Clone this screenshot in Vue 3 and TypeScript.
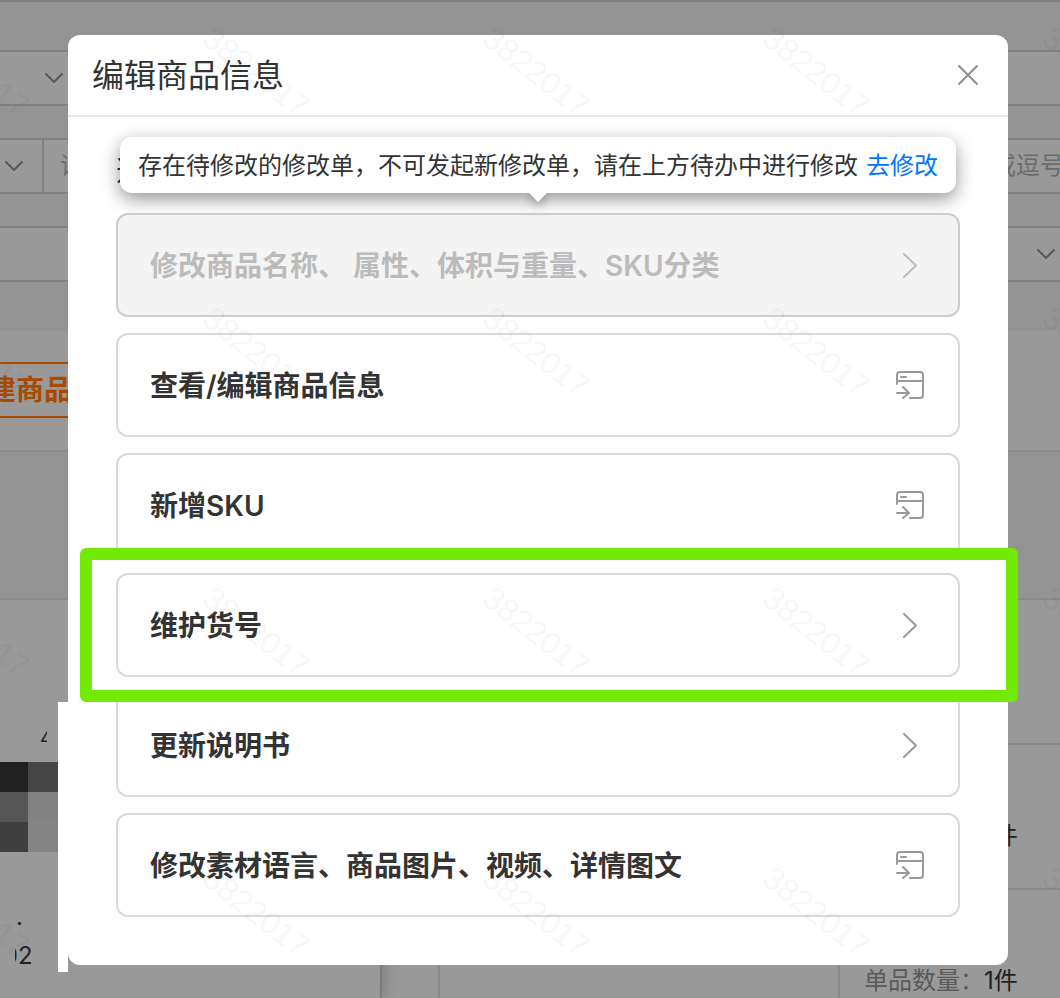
<script setup lang="ts">
type ActionKind = 'enter' | 'open'

interface EditAction {
  label: string
  kind: ActionKind
  disabled?: boolean
  marked?: boolean
}

const actions: EditAction[] = [
  { label: '修改商品名称、 属性、体积与重量、SKU分类', kind: 'enter', disabled: true },
  { label: '查看/编辑商品信息', kind: 'open' },
  { label: '新增SKU', kind: 'open' },
  { label: '维护货号', kind: 'enter', marked: true },
  { label: '更新说明书', kind: 'enter' },
  { label: '修改素材语言、商品图片、视频、详情图文', kind: 'open' },
]

const watermark = '3822017'
const watermarkCount = 20
</script>

<template>
  <div class="page">
    <div class="backdrop">
      <section class="filters">
        <div class="field">
          <button class="picker first" type="button" aria-label="展开">
            <svg width="20" height="20" viewBox="0 0 20 20"><path d="M2 6l8 8 8-8" /></svg>
          </button>
        </div>
        <div class="field">
          <button class="picker split" type="button" aria-label="展开">
            <svg width="20" height="20" viewBox="0 0 20 20"><path d="M2 6l8 8 8-8" /></svg>
          </button>
          <input class="grow" type="text" placeholder="请" aria-label="请" />
          <input class="tail" type="text" placeholder="或逗号" aria-label="或逗号" />
        </div>
        <div class="field end">
          <button class="picker last" type="button" aria-label="展开">
            <svg width="20" height="20" viewBox="0 0 20 20"><path d="M2 6l8 8 8-8" /></svg>
          </button>
        </div>
      </section>
      <div class="toolbar">
        <button class="create" type="button">建商品</button>
      </div>
      <div class="table-head"></div>
      <div class="records">
        <div class="pinned">
          <div class="code"><span class="part">4</span></div>
          <div class="mosaic"><i></i><i></i><i></i><i></i><i></i><i></i></div>
          <div class="dot">·</div>
          <div class="number"><span class="slice"><span>0</span></span>2</div>
        </div>
        <div class="spacer"></div>
        <div class="rows">
          <div class="record"></div>
          <div class="record"><span class="quantity">单品数量：</span>1件</div>
          <div class="record"><span class="quantity">单品数量：</span>1件</div>
        </div>
      </div>
    </div>

    <div class="overlay">
      <div class="patch"></div>
      <main class="dialog" role="dialog" aria-labelledby="dialog-title">
        <header class="dialog-head">
          <h1 id="dialog-title">编辑商品信息</h1>
          <button class="close" type="button" aria-label="关闭">
            <svg width="24" height="24" viewBox="0 0 24 24"><path d="M3 3l18 18M21 3L3 21" /></svg>
          </button>
        </header>
        <div class="intro">
          <span>选</span>
          <div class="tip" role="tooltip">
            <span>存在待修改的修改单，不可发起新修改单，请在上方待办中进行修改</span>
            <a href="#">去修改</a>
          </div>
        </div>
        <ul class="actions">
          <li v-for="action in actions" :key="action.label">
            <button class="action" type="button" :disabled="action.disabled">
              <span>{{ action.label }}</span>
              <svg v-if="action.kind === 'enter'" width="32" height="32" viewBox="0 0 32 32">
                <path d="M10 5l12 11.500L10 28" />
              </svg>
              <svg v-else width="32" height="32" viewBox="0 0 32 32">
                <path d="M3 15V6a3 3 0 0 1 3-3h20a3 3 0 0 1 3 3v20a3 3 0 0 1-3 3H16" />
                <path d="M4 12h24M7 8h5M3 24h12M9 18l6 6-6 5" />
              </svg>
            </button>
            <div v-if="action.marked" class="marker"></div>
          </li>
        </ul>
      </main>
    </div>

    <div class="watermarks" aria-hidden="true">
      <div v-for="n in watermarkCount" :key="n"><span>{{ watermark }}</span></div>
    </div>
  </div>
</template>

<style>
body {
  margin: 0;
}
</style>

<style scoped>
* {
  box-sizing: border-box;
}
.page {
  position: relative;
  min-height: 100vh;
  overflow: hidden;
  background: #999;
  color: #222;
  font-family: Inter, "Noto Sans CJK SC", sans-serif;
  font-size: 24px;
  line-height: 36px;
}
button,
input {
  margin: 0;
  padding: 0;
  border: 0;
  background: none;
  color: inherit;
  font: inherit;
}
svg {
  display: block;
  flex: none;
  fill: none;
  stroke: currentColor;
  stroke-width: 2;
  stroke-linecap: round;
  stroke-linejoin: round;
}

/* list page behind the dialog */
.backdrop {
  position: absolute;
  inset: 0;
  display: flex;
  flex-direction: column;
}
.filters {
  display: grid;
  gap: 32px;
  padding: 48px 0;
  border-top: 2px solid #808080;
  background: #939393;
}
.field {
  display: flex;
  height: 56px;
  border: solid #808080;
  border-width: 2px 0;
  background: #999;
}
.field.end {
  justify-content: flex-end;
}
.picker {
  display: flex;
  align-items: center;
  color: #595959;
}
.first {
  padding-left: 44px;
}
.split {
  width: 44px;
  padding-left: 4px;
  border-right: 2px solid #808080;
}
.last {
  padding-right: 4px;
}
.field input {
  min-width: 0;
}
.field input::placeholder {
  color: #6b6b6b;
  opacity: 1;
}
.grow {
  flex: 1;
  padding-left: 16px;
}
.tail {
  width: 68px;
}
.toolbar {
  display: flex;
  align-items: center;
  height: 120px;
}
.create {
  height: 56px;
  width: 120px;
  border: solid #a84b00;
  border-width: 2px 0;
  color: #a84b00;
  font-size: 28px;
  font-weight: 600;
  text-align: left;
  text-indent: -12px;
}
.table-head {
  height: 150px;
  border: solid #8a8a8a;
  border-width: 2px 0;
  background: #939393;
}
.records {
  flex: 1;
  display: flex;
  min-height: 0;
  overflow: hidden;
}
.pinned {
  width: 382px;
  padding-top: 120px;
  border-right: 2px solid #7a7a7a;
  box-shadow: 4px 0 12px rgba(0, 0, 0, 0.16);
}
.code {
  display: flex;
  padding-left: 40px;
  height: 42px;
  font-size: 20px;
}
.part {
  width: 7px;
  overflow: hidden;
}
.mosaic {
  display: grid;
  grid-template-columns: 28px 30px;
  grid-auto-rows: 30px;
}
.mosaic i:nth-child(1) {
  background: #212121;
}
.mosaic i:nth-child(2) {
  background: #454545;
}
.mosaic i:nth-child(3) {
  background: #555;
}
.mosaic i:nth-child(4) {
  background: #828282;
}
.mosaic i:nth-child(5) {
  background: #3f3f3f;
}
.mosaic i:nth-child(6) {
  background: #848484;
}
.dot {
  padding: 58px 0 0 16px;
  line-height: 28px;
}
.number {
  display: flex;
  padding-left: 15px;
}
.slice {
  display: flex;
  justify-content: flex-end;
  width: 3px;
  overflow: hidden;
}
.spacer {
  width: 58px;
  border-right: 2px solid #8a8a8a;
}
.rows {
  flex: 1;
  display: grid;
  grid-template-columns: 398px 1fr;
  grid-auto-rows: 145px;
}
.record {
  grid-column: 2;
  padding: 73px 0 0 24px;
  border: solid #8a8a8a;
  border-width: 0 0 2px 2px;
  white-space: nowrap;
}
.quantity {
  color: #595959;
}

/* dialog */
.overlay {
  position: relative;
  padding: 35px 52px 33px 68px;
}
.patch {
  position: absolute;
  left: 58px;
  top: 702px;
  width: 10px;
  height: 270px;
  background: #fff;
}
.dialog {
  border-radius: 12px;
  background: #fff;
  color: #333;
}
.dialog-head {
  display: flex;
  align-items: center;
  justify-content: space-between;
  height: 82px;
  padding: 0 28px 0 24px;
  border-bottom: 2px solid #e6e6e6;
}
h1 {
  margin: 0;
  padding-top: 2px;
  font-size: 32px;
  font-weight: 400;
  line-height: 48px;
}
.close {
  color: #8c8c8c;
}
.intro {
  position: relative;
  height: 96px;
  padding: 36px 48px 0;
  font-size: 28px;
}
.tip {
  position: absolute;
  top: 20px;
  left: 50%;
  display: flex;
  gap: 8px;
  padding: 11px 18px 9px;
  border-radius: 12px;
  background: #fff;
  box-shadow: 0 6px 18px rgba(0, 0, 0, 0.42);
  font-size: 24px;
  white-space: nowrap;
  transform: translateX(-50%);
}
.tip::after {
  content: "";
  position: absolute;
  left: 50%;
  bottom: -6px;
  width: 14px;
  height: 14px;
  margin-left: -7px;
  background: #fff;
  box-shadow: 4px 4px 10px rgba(0, 0, 0, 0.22);
  clip-path: polygon(100% 0, 200% 0, 200% 200%, 0 200%, 0 100%);
  transform: rotate(45deg);
}
.tip a {
  color: #0073ff;
  text-decoration: none;
}
.actions {
  display: grid;
  gap: 16px;
  margin: 0;
  padding: 0 48px 48px;
  list-style: none;
}
.actions li {
  position: relative;
}
.action {
  display: flex;
  align-items: center;
  justify-content: space-between;
  width: 100%;
  height: 104px;
  padding: 0 32px;
  border: 2px solid #d9d9d9;
  border-radius: 12px;
  font-size: 28px;
  font-weight: 600;
  text-align: left;
  white-space: pre;
}
.action span {
  padding-top: 2px;
}
.action svg {
  color: #999;
}
.action:disabled {
  border-color: #ccc;
  background: #f4f4f4;
  color: #bbb;
}
.action:disabled svg {
  color: #bbb;
}
.marker {
  position: absolute;
  z-index: 2;
  inset: -25px -58px -25px -36px;
  border: 12px solid #72ea05;
  border-radius: 6px;
  pointer-events: none;
}

/* account watermark tiled over the window */
.watermarks {
  position: absolute;
  top: -68px;
  left: -164px;
  display: grid;
  grid-template-columns: repeat(5, 280px);
  grid-auto-rows: 280px;
  color: rgba(0, 0, 0, 0.05);
  font-family: "Liberation Sans", Arial, sans-serif;
  font-size: 32px;
  pointer-events: none;
}
.watermarks div {
  display: flex;
  align-items: center;
  justify-content: center;
}
.watermarks span {
  transform: rotate(38deg);
}
</style>
